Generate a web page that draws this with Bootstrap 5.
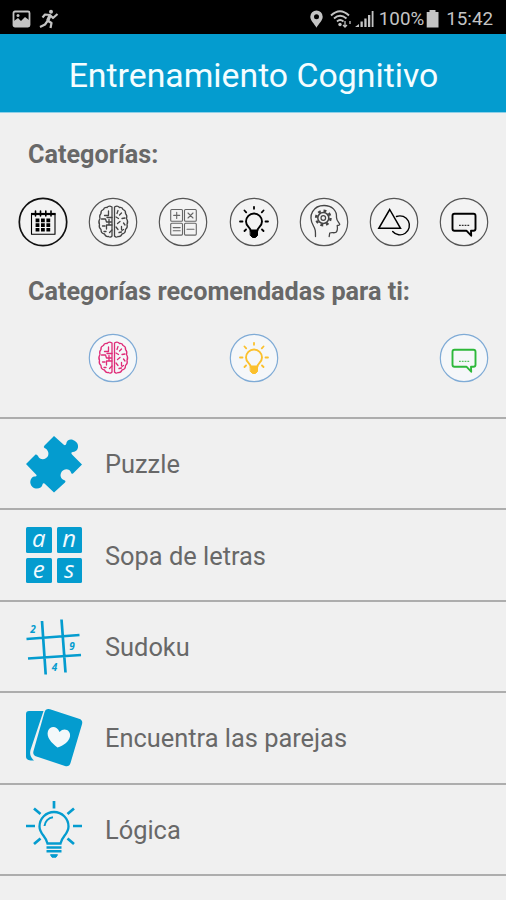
<!DOCTYPE html>
<html lang="es">
<head>
<meta charset="utf-8">
<meta name="viewport" content="width=device-width, initial-scale=1">
<title>Entrenamiento Cognitivo</title>
<link rel="stylesheet" href="https://cdn.jsdelivr.net/npm/bootstrap@5.3.0/dist/css/bootstrap.min.css">
<style>
  :root { --brand: #049ccf; --ink: #686868; }
  body { font-family: Roboto, "Liberation Sans", sans-serif; background: #f0f0f0; color: var(--ink); }
  .screen { height: 900px; overflow: hidden; }
  .status-bar { height: 34px; background: #000; color: #c4c4c4; font-size: 18.8px; line-height: 34px; padding: 3px 13px 0 12px; }
  .status-bar .pct { margin-left: 3px; }
  .status-bar .battery { margin: 0 7px 0 2px; }
  .app-bar { height: 79px; background: var(--brand); border-bottom: 1px solid #8fd0e8; padding: 5px 0 0 1px; }
  .app-bar h1 { font-size: 33.8px; font-weight: 400; line-height: 1; color: #f4fdff; }
  .section-title { font-size: 25.2px; font-weight: 700; line-height: 28px; padding: 28px 0 0 28px; margin: 0; }
  .section-title.second { padding-top: 31px; }
  .bubbles { padding: 27.5px 6.400px 0 7.600px; }
  .bubble { width: 50px; height: 50px; display: block; fill: none; stroke: currentColor; stroke-linecap: round; stroke-linejoin: round; }
  .bubble .ring { stroke: #555; stroke-width: 1.2; fill: #f3f3f3; }
  .bubble .ring.strong { stroke: #111; stroke-width: 1.7; }
  .tinted .ring { stroke: #7fabd6; fill: #f5f7f9; }
  .soft { color: #444; } .faint { color: #666; }
  .pink { color: #df2c78; } .amber { color: #fbc02d; } .green { color: #2db83a; }
  .games { border-top: 2px solid #adadad; margin-top: 34px; }
  .game { height: 91.4px; border-bottom: 2px solid #adadad; padding: 1px 0 0 24px; font-size: 25.4px; }
  .game-icon { width: 60px; height: 60px; margin-right: 21px; color: var(--brand); flex: none; }
  .tiles { display: grid; grid-template-columns: 25.5px 25.5px; grid-auto-rows: 25.5px; gap: 5px; padding: 1.5px 2px; }
  .tiles span { background: var(--brand); color: #f0faff; border-radius: 1.500px; font: italic 500 24px/21px "Open Sans", sans-serif; text-align: center; }
</style>
<script src="https://cdn.jsdelivr.net/npm/bootstrap@5.3.0/dist/js/bootstrap.bundle.min.js"></script>
</head>
<body>
<svg class="d-none" aria-hidden="true">
  <symbol id="brain" viewBox="0 0 50 50">
    <g stroke-width="1.300">
      <path d="M24 10q-3-2-5 .5q-3-.5-3.500 2q-3 1-2.500 4q-2 2-1 5q-2 3-.5 6q-1 3 1.500 5q0 4 3.500 4.500q1 3 4 2.500q2 1.500 3.500-.5zM26.500 10q3-2 5 .5q3-.5 3.500 2q3 1 2.500 4q2 2 1 5q2 3 .5 6q1 3-1.500 5q0 4-3.500 4.500q-1 3-4 2.500q-2 1.500-3.500-.5z"/>
      <path d="M20.500 14v4.500h-4M24 20.500h-5M13.500 22h4l1 3h5M24 28h-5.500v4M14.500 29h2.500M16 34.500h2M24 33l-2.500 2.500M21 22.500v5"/>
      <path d="M30 13.500l-1 3M33.500 16l-2 2M28 20l2.500 1.500M34 21.500l3-.5M32 24.500l-2.500 2M35.500 26l1.500 2M28 30l2 2.500M33.500 29.500v3M31 35.500l2.500-.5M34 33.500l1.500-1"/>
    </g>
  </symbol>
  <symbol id="idea" viewBox="0 0 50 50">
    <path stroke-width="1.900" d="M21.500 33.500c0-3-4.500-4-4.500-9a8 8 0 0 1 16 0c0 5-4.500 6-4.500 9z"/>
    <path fill="currentColor" stroke-width="1" d="M21.500 34h7v4.500l-2 2h-3l-2-2z"/>
    <path stroke-width="1.800" d="M25 9.800v2M15.500 13.500l1.700 1.800M34.500 13.500l-1.700 1.800M11 24.500h2.500M36.500 24.500H39M15.500 34l1.500-1.500M34.500 34L33 32.500"/>
  </symbol>
  <symbol id="chat" viewBox="0 0 50 50">
    <path stroke-width="1.900" d="M15.500 16.700h19a2 2 0 0 1 2 2v13a2 2 0 0 1-2 2h-2.500l.2 5-4.800-5H15.500a2 2 0 0 1-2-2v-13a2 2 0 0 1 2-2z"/>
    <path stroke-width="1" stroke-dasharray="1.800 1" stroke-linecap="butt" d="M20 28.300h10.500"/>
  </symbol>
</svg>

<div class="screen">
  <div class="status-bar d-flex align-items-center justify-content-between">
    <div class="d-flex align-items-center gap-1">
      <svg width="19" height="18" viewBox="0 0 19 18"><rect x="1.500" y="1.500" width="16" height="15" rx="1.500" fill="none" stroke="currentColor" stroke-width="1.800"/><path d="M2 16v-5l4-3 3 3 4-4 4 3v6z" fill="currentColor"/><circle cx="6" cy="5.500" r="1.500" fill="currentColor"/></svg>
      <svg class="ms-1" width="20" height="20" viewBox="0 0 20 20" fill="none" stroke="currentColor" stroke-width="2.200" stroke-linejoin="round"><circle cx="12" cy="2.700" r="2" fill="currentColor" stroke="none"/><path d="M3.500 8.500L6 5.500l5 .5 3 3 4.500-4"/><path stroke-width="3.200" d="M11 6.500L8.500 12"/><path d="M8.500 11.500L12.500 14l-1 5M8.500 12L6 15.500l-5 2.500"/></svg>
    </div>
    <div class="d-flex align-items-center">
      <svg width="67" height="20" viewBox="0 0 67 20" fill="currentColor">
        <path fill-rule="evenodd" d="M7.500 1.500a6.200 6.200 0 0 1 6.200 6.200c0 4-4.200 7-6.200 11-2-4-6.200-7-6.200-11a6.200 6.200 0 0 1 6.200-6.200zm0 3.700a2.500 2.500 0 1 0 0 5 2.500 2.500 0 0 0 0-5z"/>
        <g fill="none" stroke="currentColor" stroke-width="1.900"><path d="M22 6.500q9-8.500 18 0M25 9.500q6-5.500 12.500 0M28 12.500q3-2.800 6.500 0"/><path stroke-width="1.300" d="M36 12v6m-2-2l2 2 2-2M41 15v-3"/></g><circle cx="31" cy="15.500" r="1.700"/>
        <path d="M46 18l4-3v3zM51.500 12.500h2.300V18h-2.300zM55.300 9.500h2.300V18h-2.300zM59 6h2.300v12H59zM62.700 2h1.800v16h-1.800z"/>
      </svg>
      <span class="pct">100%</span>
      <svg class="battery" width="13" height="19" viewBox="0 0 13 19" fill="currentColor"><path d="M3.500 1h6v2H12.500v15.500H.7V3h2.800z"/></svg>
      <span class="clock">15:42</span>
    </div>
  </div>

  <header class="app-bar d-flex align-items-center justify-content-center">
    <h1 class="m-0 text-nowrap">Entrenamiento Cognitivo</h1>
  </header>

  <main>
    <h2 class="section-title">Categorías:</h2>
    <div class="bubbles row g-0 flex-nowrap text-black">
      <div class="col d-flex justify-content-center">
        <svg class="bubble" viewBox="0 0 50 50"><circle class="ring strong" cx="25" cy="25" r="23.700"/>
          <path stroke-width="1.100" d="M13.500 16.500h23.500v20.700h-23.500z"/><path stroke-width="2.200" stroke-linecap="butt" d="M13 17h24.500"/><path stroke-width="1.600" d="M17.500 14v5M22.500 14v5M27.800 14v5M33 14v5"/>
          <path stroke-width="3.600" stroke-linecap="butt" stroke-dasharray="3.800 1.600" d="M17.600 23.400h14.700M17.600 28.100h14.700M17.600 32.800h14.700"/></svg>
      </div>
      <div class="col d-flex justify-content-center"><svg class="bubble soft" viewBox="0 0 50 50"><circle class="ring" cx="25" cy="25" r="23.700"/><use href="#brain"/></svg></div>
      <div class="col d-flex justify-content-center">
        <svg class="bubble faint" viewBox="0 0 50 50"><circle class="ring" cx="25" cy="25" r="23.700"/>
          <g stroke-width="1.100"><rect x="12.700" y="12.500" width="11.800" height="11.800" rx="1"/><rect x="26.500" y="12.500" width="11.800" height="11.800" rx="1"/><rect x="12.700" y="26.300" width="11.800" height="11.800" rx="1"/><rect x="26.500" y="26.300" width="11.800" height="11.800" rx="1"/>
          <path d="M15.700 18.400h6M18.700 15.400v6M30 16l5 5M35 16l-5 5M15.200 30.600h7M15.200 33.800h7M29 32.200h7"/></g></svg>
      </div>
      <div class="col d-flex justify-content-center"><svg class="bubble" viewBox="0 0 50 50"><circle class="ring" cx="25" cy="25" r="23.700"/><use href="#idea"/></svg></div>
      <div class="col d-flex justify-content-center">
        <svg class="bubble soft" viewBox="0 0 50 50"><circle class="ring" cx="25" cy="25" r="23.700"/>
          <path stroke-width="1.300" d="M16.500 39.500c0-6 0-7-2-10.500C8 18 15 8.500 25 8.500c8 0 13 5 12.500 12 0 3 2.500 5 3.200 6.700 0 1-1 1.200-2.500 1.300.5 3 0 6-1.500 7-2 .6-4-.2-6 .5l-.5 3.500"/>
          <circle cx="24.300" cy="21" r="5.500" stroke-width="1.500"/><circle cx="24.300" cy="21" r="7.200" stroke-width="2.400" stroke-linecap="butt" stroke-dasharray="2.830 2.830"/><circle cx="24.300" cy="21" r="2.300" stroke-width="1.200"/></svg>
      </div>
      <div class="col d-flex justify-content-center">
        <svg class="bubble" viewBox="0 0 50 50"><circle class="ring" cx="25" cy="25" r="23.700"/>
          <path stroke-width="1.500" stroke-linejoin="miter" d="M20.700 12.500L31.500 31.300H9.800z"/><path stroke-width="1.400" d="M27.500 19.500a9.500 9.500 0 1 1-3.800 15"/></svg>
      </div>
      <div class="col d-flex justify-content-center"><svg class="bubble" viewBox="0 0 50 50"><circle class="ring" cx="25" cy="25" r="23.700"/><use href="#chat"/></svg></div>
    </div>

    <h2 class="section-title second">Categorías recomendadas para ti:</h2>
    <div class="bubbles tinted row g-0 flex-nowrap">
      <div class="col"></div>
      <div class="col d-flex justify-content-center"><svg class="bubble pink" viewBox="0 0 50 50"><circle class="ring" cx="25" cy="25" r="23.700"/><use href="#brain"/></svg></div>
      <div class="col"></div>
      <div class="col d-flex justify-content-center"><svg class="bubble amber" viewBox="0 0 50 50"><circle class="ring" cx="25" cy="25" r="23.700"/><use href="#idea"/></svg></div>
      <div class="col"></div>
      <div class="col"></div>
      <div class="col d-flex justify-content-center"><svg class="bubble green" viewBox="0 0 50 50"><circle class="ring" cx="25" cy="25" r="23.700"/><use href="#chat"/></svg></div>
    </div>

    <div class="games">
      <div class="game d-flex align-items-center">
        <svg class="game-icon" viewBox="0 0 60 60" fill="currentColor"><path d="M30 2L39.500 10.500Q41.500 12 42.200 10C42.500 6 46.500 4.700 49 6C53.500 7.500 55.500 12 53 16C51.500 18 49 17.500 47.500 18.500Q47 19.500 48 20.500L58 30.500L49 39.500Q47.500 40.500 47 38.500C45.500 34 39 34.500 37 39C35.500 43 38 45.500 41 46.500Q42 47.500 41 48.500L30 58.500L20.500 49.500Q19 48.500 18.500 50.500C18 54.500 12 56 8.500 53C4.500 49 6.500 43.500 10 42.500Q13 42.500 12.500 41L2 30L11.500 20.500Q13 20 14 22C16 26.500 22 26 24 22C25.500 18 23 15 20.500 14Q19 13 20.500 11.500Z"/></svg>
        <span>Puzzle</span>
      </div>
      <div class="game d-flex align-items-center">
        <div class="game-icon tiles"><span>a</span><span>n</span><span>e</span><span>s</span></div>
        <span>Sopa de letras</span>
      </div>
      <div class="game d-flex align-items-center">
        <svg class="game-icon" viewBox="0 0 60 60"><path fill="none" stroke="currentColor" stroke-width="2.700" d="M18 4l3.700 53.500M37.500 2.500L41.500 55.500M2.500 22L55.500 18M4 41.500L57 38"/>
          <g fill="currentColor" font-family="Open Sans, sans-serif" font-weight="700" font-style="italic" font-size="10" text-anchor="middle"><text x="9" y="16">2</text><text x="48" y="33">9</text><text x="30.500" y="53.500">4</text></g></svg>
        <span>Sudoku</span>
      </div>
      <div class="game d-flex align-items-center">
        <svg class="game-icon" viewBox="0 0 60 60"><path fill="currentColor" d="M5 3h14.500L6.500 42c-1 4 0 7 3.500 10.500-5 .5-8-1-8-4V6a3 3 0 0 1 3-3z"/><path fill="currentColor" d="M26 1.200l29 9.600a4.500 4.500 0 0 1 3 5.500L46.500 55a4.500 4.500 0 0 1-5.500 3L12.500 48.500a4.500 4.500 0 0 1-3-5.500L20.500 4.200a4.500 4.500 0 0 1 5.500-3z"/><path fill="#f3f8fa" d="M33.500 39.500C27.500 35 22 29 24 23c2-5.500 9-5.500 11.500 1 4.500-5 11.500-2 10.500 4.500-.8 5-6.500 9-12.500 11z"/></svg>
        <span>Encuentra las parejas</span>
      </div>
      <div class="game d-flex align-items-center">
        <svg class="game-icon" viewBox="0 0 60 60" fill="none" stroke="currentColor" stroke-width="2.300"><path d="M23.500 43.500C22 36 15.500 34 15.500 26.500a14.500 14.500 0 0 1 29 0C44.500 34 38 36 36.500 43.500z"/><path stroke-width="2" d="M20.500 26a9.500 9.500 0 0 1 8.500-8.700"/><path stroke-width="2.600" d="M22.500 47.500h15M22.500 51.300h15"/><path d="M26.500 54.700h7l-1.500 2.500h-4z" fill="currentColor" stroke-width="1"/><path stroke-width="2.700" d="M30 1v7.500M10 8.500l6.500 5.500M50 8.500L43.500 14M2 26h9M49 26h9M10 44l6.500-5.500M50 44l-6.500-5.500"/></svg>
        <span>Lógica</span>
      </div>
    </div>
  </main>
</div>
</body>
</html>
